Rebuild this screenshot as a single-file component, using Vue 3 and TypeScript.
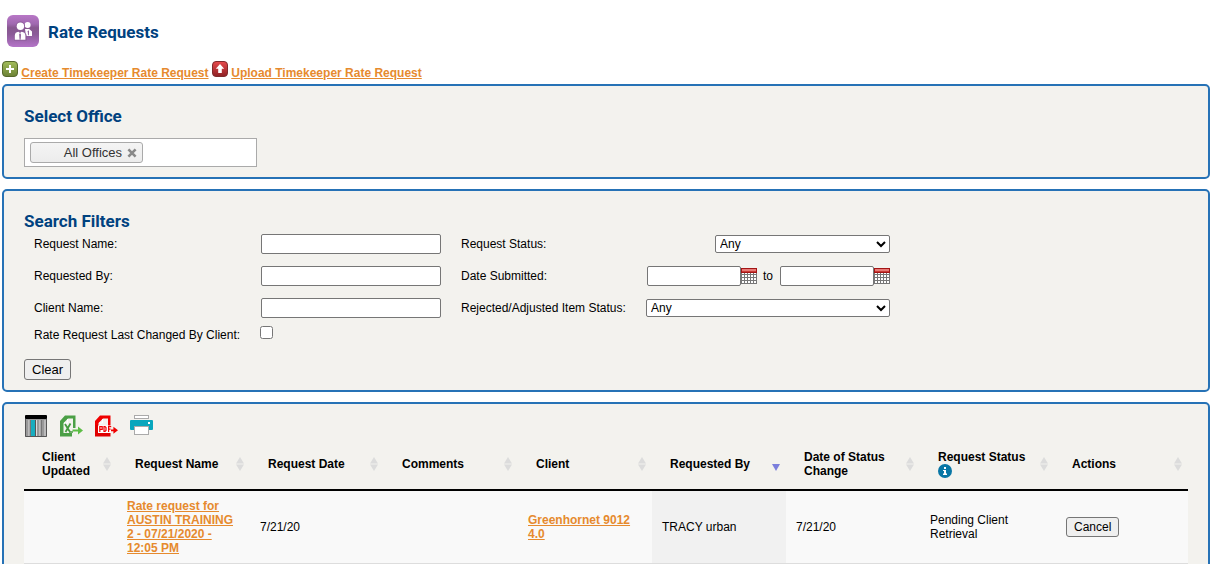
<script setup lang="ts">
import { ref } from 'vue'

interface Column {
  key: string
  title: string
  info?: boolean
  sorted?: boolean
}

const columns: Column[] = [
  { key: 'updated', title: 'Client Updated' },
  { key: 'name', title: 'Request Name' },
  { key: 'date', title: 'Request Date' },
  { key: 'comments', title: 'Comments' },
  { key: 'client', title: 'Client' },
  { key: 'by', title: 'Requested By', sorted: true },
  { key: 'changed', title: 'Date of Status Change' },
  { key: 'status', title: 'Request Status', info: true },
  { key: 'actions', title: 'Actions' },
]

const rows = [
  {
    name: 'Rate request for AUSTIN TRAINING 2 - 07/21/2020 - 12:05 PM',
    date: '7/21/20',
    comments: '',
    client: 'Greenhornet 9012 4.0',
    by: 'TRACY urban',
    changed: '7/21/20',
    status: 'Pending Client Retrieval',
  },
]

const requestName = ref('')
const requestedBy = ref('')
const clientName = ref('')
const dateFrom = ref('')
const dateTo = ref('')
const changedByClient = ref(false)
const status = ref('Any')
const itemStatus = ref('Any')

function clearFilters() {
  requestName.value = requestedBy.value = clientName.value = ''
  dateFrom.value = dateTo.value = ''
  changedByClient.value = false
  status.value = itemStatus.value = 'Any'
}
</script>

<template>
  <main class="page">
    <header class="title">
      <svg class="logo" width="32" height="32" viewBox="0 0 32 32" aria-hidden="true">
        <defs>
          <linearGradient id="purple" x1="0" y1="0" x2="0" y2="1">
            <stop offset="0" stop-color="#b877c6" />
            <stop offset="0.28" stop-color="#a069b0" />
            <stop offset="0.4" stop-color="#87588f" />
            <stop offset="0.6" stop-color="#8b5b98" />
            <stop offset="1" stop-color="#b474c8" />
          </linearGradient>
        </defs>
        <rect width="32" height="32" rx="6" fill="url(#purple)" />
        <circle cx="20.6" cy="10" r="3" fill="#fff" />
        <path d="M18 14h4.2l2.8 2.6V21h-6z" fill="#fff" />
        <circle cx="13.4" cy="11.2" r="4.6" fill="#8d5d99" />
        <path d="M7 25.5v-5.8l4-3.6h5l3.6 3.6v5.8z" fill="#8a5b96" />
        <circle cx="13.4" cy="11.2" r="3.7" fill="#fff" />
        <path d="M7.8 24.8v-4.4q.2-3.2 3.6-3.6l1.6 1.2 1.6-1.2q3.6.4 3.8 3.6v4.4z" fill="#fff" />
        <path d="M13 18l1 1.5-.4 5.3h-1l-.4-5.3z" fill="#8a5b96" />
        <path d="M21.4 15.2l.6 1-.2 4h-.8l-.2-4z" fill="#8a5b96" />
      </svg>
      <h1>Rate Requests</h1>
    </header>

    <nav class="links">
      <svg width="16" height="16" viewBox="0 0 16 16" aria-hidden="true">
        <defs>
          <linearGradient id="green" x1="0" y1="0" x2="0" y2="1">
            <stop offset="0" stop-color="#a3bd5a" />
            <stop offset="1" stop-color="#6b8135" />
          </linearGradient>
        </defs>
        <rect x="0.5" y="0.5" width="15" height="15" rx="3.5" fill="url(#green)" stroke="#56682c" />
        <path d="M8 4v8M4 8h8" stroke="#fff" stroke-width="2" />
      </svg>
      {{ ' ' }}<a href="#">Create Timekeeper Rate Request</a>{{ ' ' }}
      <svg width="16" height="16" viewBox="0 0 16 16" aria-hidden="true">
        <defs>
          <linearGradient id="red" x1="0" y1="0" x2="0" y2="1">
            <stop offset="0" stop-color="#e84a4c" />
            <stop offset="1" stop-color="#8d2024" />
          </linearGradient>
        </defs>
        <rect x="0.5" y="0.5" width="15" height="15" rx="3.5" fill="url(#red)" stroke="#7e2a2c" />
        <path d="M8 3l4.2 4.8H9.8V12H6.2V7.8H3.8z" fill="#fff" />
      </svg>
      {{ ' ' }}<a href="#">Upload Timekeeper Rate Request</a>
    </nav>

    <section class="panel">
      <h2>Select Office</h2>
      <div class="office-box">
        <span class="chip">
          All Offices
          <button type="button" class="remove" aria-label="Remove All Offices">
            <svg width="10" height="10" viewBox="0 0 10 10">
              <path d="M1.4 1.4l7.2 7.2M8.6 1.4L1.4 8.6" stroke="#888" stroke-width="2.6" />
            </svg>
          </button>
        </span>
      </div>
    </section>

    <section class="panel">
      <h2>Search Filters</h2>
      <div class="filters">
        <label for="request-name">Request Name:</label>
        <input id="request-name" v-model="requestName" type="text" />
        <label for="status" class="second">Request Status:</label>
        <select id="status" v-model="status" class="short">
          <option>Any</option>
        </select>

        <label for="requested-by">Requested By:</label>
        <input id="requested-by" v-model="requestedBy" type="text" />
        <label for="date-from" class="second">Date Submitted:</label>
        <div class="dates">
          <input id="date-from" v-model="dateFrom" type="text" />
          <button type="button" class="calendar" aria-label="Pick start date">
            <svg width="16" height="16" viewBox="0 0 16 16">
              <rect width="16" height="16" fill="#fff" />
              <path d="M.5 5v11M3.5 5v11M6.5 5v11M9.5 5v11M12.5 5v11M15.5 5v11M0 6.5h16M0 9.5h16M0 12.5h16M0 15.5h16" stroke="#777" />
              <rect x="0.5" y="0.5" width="15" height="4" fill="#e77a76" stroke="#a31515" />
              <path d="M1 3.5h14" stroke="#c93a36" />
            </svg>
          </button>
          <label for="date-to">to</label>
          <input id="date-to" v-model="dateTo" type="text" />
          <button type="button" class="calendar" aria-label="Pick end date">
            <svg width="16" height="16" viewBox="0 0 16 16">
              <rect width="16" height="16" fill="#fff" />
              <path d="M.5 5v11M3.5 5v11M6.5 5v11M9.5 5v11M12.5 5v11M15.5 5v11M0 6.5h16M0 9.5h16M0 12.5h16M0 15.5h16" stroke="#777" />
              <rect x="0.5" y="0.5" width="15" height="4" fill="#e77a76" stroke="#a31515" />
              <path d="M1 3.5h14" stroke="#c93a36" />
            </svg>
          </button>
        </div>

        <label for="client-name">Client Name:</label>
        <input id="client-name" v-model="clientName" type="text" />
        <label for="item-status" class="second">Rejected/Adjusted Item Status:</label>
        <select id="item-status" v-model="itemStatus">
          <option>Any</option>
        </select>
      </div>
      <div class="check-row">
        <label for="changed">Rate Request Last Changed By Client:</label>
        <input id="changed" v-model="changedByClient" type="checkbox" />
      </div>
      <button type="button" class="button clear" @click="clearFilters">Clear</button>
    </section>

    <section class="panel results">
      <div class="toolbar">
        <button type="button" aria-label="Columns">
          <svg width="24" height="23" viewBox="0 0 24 23">
            <rect x="1" y="1" width="22" height="21" rx="1" fill="#999" />
            <path d="M6 5v16M11.5 5v16M17 5v16" stroke="#555" />
            <path d="M5 5v16M12.5 5v16M16 5v16M21 5v16" stroke="#ddd" />
            <rect x="7" y="5" width="4" height="16" fill="#18adbf" />
            <path d="M1.5 4v17.5h21V4" fill="none" stroke="#555" />
            <rect x="1" y="0" width="22" height="4" rx="1" fill="#000" />
          </svg>
        </button>
        <button type="button" aria-label="Export to Excel">
          <svg width="24" height="23" viewBox="0 0 24 23">
            <path d="M6 0.5H16.5V13H14V3.5H9L4.5 8V18H13v3.5H1V6z" fill="#4a9f45" />
            <path d="M5 8h3.5V4" fill="none" stroke="#fff" />
            <path d="M6 9l5 8M11.5 8.5L6.5 17" stroke="#449a3f" stroke-width="1.8" />
            <path d="M10 17h4" stroke="#449a3f" stroke-width="1.5" />
            <path d="M13.5 14.4h5.5V11.5l5 4-5 4v-2.9h-5.5z" fill="#5cbd45" />
          </svg>
        </button>
        <button type="button" aria-label="Export to PDF">
          <svg width="24" height="23" viewBox="0 0 24 23">
            <path d="M6 0.5H16.5V11H14V3.5H9L4.5 8V11H1V6z" fill="#f00000" />
            <path d="M1 10h3v8h9.5v-1h3v4.5H1z" fill="#e00000" />
            <path d="M5 8h3.5V4" fill="none" stroke="#fff" />
            <rect x="4" y="10.5" width="13" height="7.5" fill="#fff" />
            <path d="M5.8 17v-5.4h2.4v2.8H5.8M10 11.6v4.8h1l1-1v-2.8l-1-1zM14.6 17v-5.4h2.6M14.6 14.2h2" fill="none" stroke="#f00000" stroke-width="1.2" />
            <path d="M17 14.4h2.4V11.8l4.6 3.5-4.6 3.5v-2.6H17z" fill="#f00000" />
          </svg>
        </button>
        <button type="button" aria-label="Print">
          <svg width="24" height="23" viewBox="0 0 24 23">
            <rect x="5.5" y="0.5" width="14" height="3" fill="#fff" stroke="#aaa" />
            <rect x="1" y="5" width="23" height="10" rx="1" fill="#08a6bd" />
            <rect x="19" y="7" width="2" height="2" fill="#fff" />
            <rect x="5.5" y="11.5" width="14" height="8" fill="#fff" stroke="#aaa" />
          </svg>
        </button>
      </div>

      <table>
        <colgroup>
          <col class="narrow" />
          <col class="name" />
          <col v-for="n in 7" :key="n" />
        </colgroup>
        <thead>
          <tr>
            <th v-for="c in columns" :key="c.key" scope="col">
              <div class="head">
                <span>
                  {{ c.title }}
                  <svg v-if="c.info" width="14" height="14" viewBox="0 0 14 14" aria-hidden="true">
                    <circle cx="7" cy="7" r="7" fill="#0876a5" />
                    <path d="M6 3h2v2H6zM5 6h3v3.6h1V11H5V9.6h1V7H5z" fill="#fff" />
                  </svg>
                </span>
                <svg class="sort" width="8" height="14" viewBox="0 0 8 14" aria-hidden="true">
                  <path v-if="c.sorted" d="M0 7h8l-4 7z" fill="#7b7fdc" />
                  <path v-else d="M4 0l4 6.4H0zM0 7.6h8L4 14z" fill="#dcdcdc" />
                </svg>
              </div>
            </th>
          </tr>
        </thead>
        <tbody>
          <tr v-for="r in rows" :key="r.name">
            <td></td>
            <td><a href="#">{{ r.name }}</a></td>
            <td>{{ r.date }}</td>
            <td>{{ r.comments }}</td>
            <td><a href="#">{{ r.client }}</a></td>
            <td class="sorted">{{ r.by }}</td>
            <td>{{ r.changed }}</td>
            <td>{{ r.status }}</td>
            <td><button type="button" class="button cancel">Cancel</button></td>
          </tr>
        </tbody>
      </table>
    </section>
  </main>
</template>

<style>
html,
body {
  background: #fff;
  overflow: hidden;
}
</style>

<style scoped>
.page {
  padding: 15px 5px 0 2px;
  font: 12px/14px "Liberation Sans", Arial, sans-serif;
  color: #000;
}
h1,
h2 {
  margin: 0;
  font: bold 17px/20px Roboto, "Liberation Sans", sans-serif;
  color: #00427f;
}
h1 {
  padding-top: 2px;
}
svg {
  display: block;
}
button,
input,
select {
  font-family: inherit;
  box-sizing: border-box;
  margin: 0;
}
a {
  color: #e68a2e;
  font-weight: bold;
  text-decoration: underline;
}
.title {
  display: flex;
  align-items: center;
  gap: 9px;
  padding-left: 5px;
}
.links {
  margin-top: 14px;
  height: 23px;
}
.links svg {
  display: inline;
}
.panel {
  margin-bottom: 10px;
  padding: 20px 20px 10px;
  border: 2px solid #2672b6;
  border-radius: 5px;
  background: #f3f2ee;
}
.office-box {
  display: flex;
  box-sizing: border-box;
  width: 233px;
  height: 29px;
  margin-top: 12px;
  padding: 3px 5px;
  border: 1px solid #aaa;
  background: #fff;
}
.chip {
  display: flex;
  align-items: center;
  justify-content: flex-end;
  gap: 5px;
  box-sizing: border-box;
  width: 113px;
  height: 21px;
  padding-right: 5px;
  border: 1px solid #aaa;
  border-radius: 3px;
  background: linear-gradient(#f4f4f4, #ececec);
  color: #333;
  font-size: 13px;
}
.remove,
.calendar,
.toolbar button {
  padding: 0;
  border: 0;
  background: none;
}
.filters {
  display: grid;
  grid-template-columns: 227px 180px 205px 244px;
  grid-auto-rows: 20px;
  row-gap: 12px;
  align-items: center;
  padding: 3px 0 0 10px;
}
.second {
  padding-left: 20px;
}
input[type="text"] {
  width: 100%;
  height: 20px;
  padding: 1px 2px;
  border: 1px solid #767676;
  border-radius: 2px;
  background: #fff;
}
select {
  width: 100%;
  height: 18px;
  border: 1px solid #767676;
  border-radius: 2px;
  background-color: #fff;
  color: #000;
  font-size: 12px;
}
.short {
  width: 175px;
  justify-self: end;
}
.dates {
  display: flex;
  align-items: center;
  padding-left: 1px;
}
.dates input[type="text"] {
  flex: 1;
  min-width: 0;
}
.dates label {
  padding: 0 7px 0 6px;
}
.check-row {
  display: grid;
  grid-template-columns: 226px 13px;
  align-items: start;
  margin-top: 8px;
  padding-left: 10px;
}
.check-row label {
  padding-top: 2px;
}
.check-row input {
  width: 13px;
  height: 13px;
}
.button {
  display: block;
  padding: 0 7px;
  border: 1px solid #767676;
  border-radius: 3px;
  background: #efefef;
  color: #000;
}
.clear {
  height: 21px;
  margin-top: 17px;
  font-size: 13px;
}
.cancel {
  height: 20px;
  margin-left: 2px;
  font-size: 12px;
}
.results {
  padding-top: 11px;
}
.toolbar {
  display: flex;
  gap: 11px;
  margin-bottom: 2px;
}
table {
  width: 100%;
  table-layout: fixed;
  border-collapse: separate;
  border-spacing: 0;
}
.narrow {
  width: 93px;
}
.name {
  width: 133px;
}
th {
  padding: 10px 6px 11px 18px;
  border-bottom: 2px solid #000;
  text-align: left;
}
.head {
  display: flex;
  align-items: center;
  justify-content: space-between;
}
.sort {
  flex: none;
}
td {
  padding: 8px 10px;
  border-bottom: 1px solid #ddd;
  background: #f9f9f9;
}
td.sorted {
  background: #f1f1f1;
}
</style>
